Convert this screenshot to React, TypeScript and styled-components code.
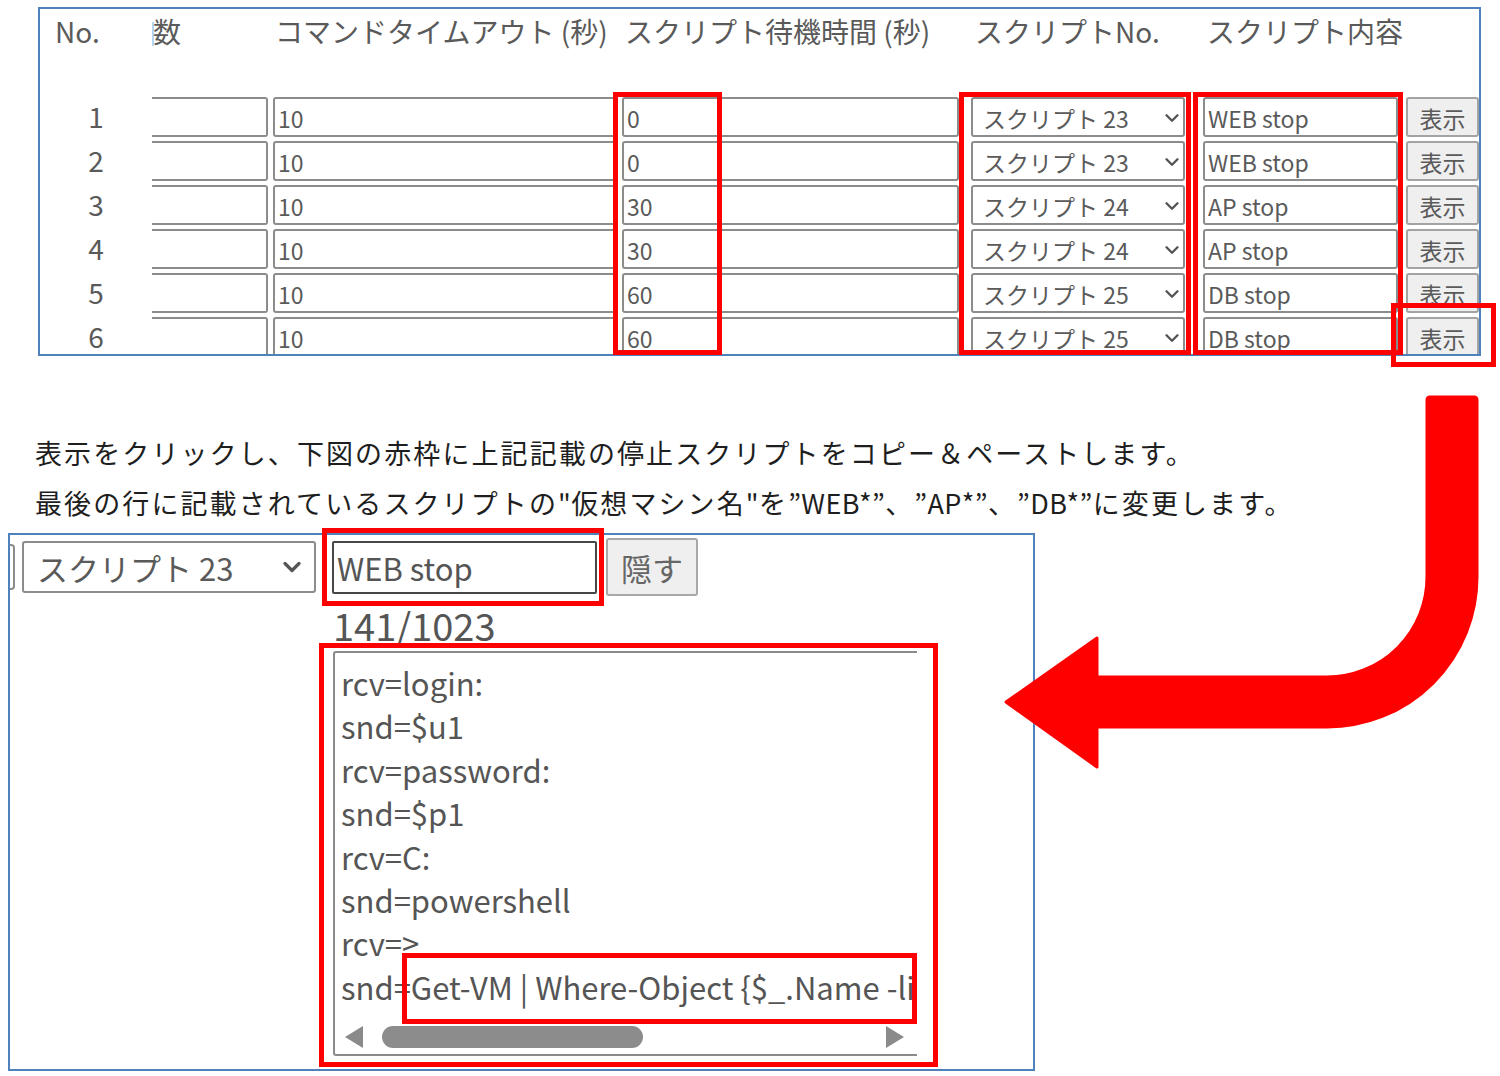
import styled, { createGlobalStyle } from 'styled-components';
import { ChevronDown } from 'lucide-react';

const GlobalStyle = createGlobalStyle`
  html, body {
    margin: 0;
    padding: 0;
    background: #fff;
  }
  body {
    font-family: 'Noto Sans CJK JP', 'Noto Sans', sans-serif;
  }
`;

const Page = styled.div`
  position: relative;
  width: 1500px;
  height: 1076px;
  overflow: hidden;
  background: #fff;
  display: flex;
  flex-direction: column;
`;

/* ---------- top table ---------- */

const cols = '112px 116px 349px 342px 226px 213px 81px';

const TopSection = styled.div`
  position: relative;
  margin: 7px 0 0 38px;
  width: 1443px;
`;

const TablePanel = styled.div`
  box-sizing: border-box;
  width: 1443px;
  height: 349px;
  border: 2px solid #4f81bd;
  overflow: hidden;
`;

const HeaderRow = styled.div`
  box-sizing: border-box;
  display: grid;
  grid-template-columns: ${cols};
  height: 88px;
  padding-top: 3px;
`;

const HeadCell = styled.div<{ $pl: number }>`
  padding-left: ${({ $pl }) => $pl}px;
  font-size: 28px;
  line-height: 39px;
  color: #5a5a5a;
  white-space: nowrap;
`;

const Caret = styled.span`
  display: inline-block;
  width: 2px;
  height: 24px;
  margin-right: -1px;
  vertical-align: -3px;
  background: #b5d6f2;
`;

const Rows = styled.div`
  display: flex;
  flex-direction: column;
  gap: 4px;
`;

const Row = styled.div`
  display: grid;
  grid-template-columns: ${cols};
  height: 40px;
`;

const RowNo = styled.div`
  text-align: center;
  font-size: 28px;
  line-height: 39px;
  color: #5a5a5a;
`;

const Field = styled.input<{ $ml?: number; $cutLeft?: boolean }>`
  box-sizing: border-box;
  margin: 0 0 0 ${({ $ml }) => $ml ?? 0}px;
  width: calc(100% - ${({ $ml }) => $ml ?? 0}px);
  height: 40px;
  border: 2px solid #8c8c8c;
  border-radius: 3px;
  padding: 2px 3px 0;
  font-family: inherit;
  font-size: 23px;
  color: #5a5a5a;
  background: #fff;
  outline: none;
  ${({ $cutLeft }) => $cutLeft && 'border-left: none; border-radius: 0 3px 3px 0;'}
`;

const SelectBox = styled.div<{ $ml: number }>`
  box-sizing: border-box;
  display: flex;
  align-items: center;
  justify-content: space-between;
  margin-left: ${({ $ml }) => $ml}px;
  height: 40px;
  border: 2px solid #8c8c8c;
  border-radius: 3px;
  padding: 2px 0 0 10px;
  font-size: 23px;
  color: #5a5a5a;
  white-space: nowrap;
  background: #fff;
`;

const ShowButton = styled.button`
  box-sizing: border-box;
  margin-left: 8px;
  height: 40px;
  border: 2px solid #a3a3a3;
  border-radius: 3px;
  padding: 2px 0 0;
  background: #efefef;
  font-family: inherit;
  font-size: 23px;
  color: #5a5a5a;
`;

/* ---------- note ---------- */

const Note = styled.div`
  margin: 72px 0 0 35px;
  font-size: 27px;
  line-height: 50px;
  letter-spacing: 2.1px;
  color: #1e1e1e;
  white-space: nowrap;
  text-spacing-trim: space-all;
`;

const Latin = styled.span`
  letter-spacing: 0.4px;
`;

/* ---------- lower editor ---------- */

const LowerSection = styled.div`
  position: relative;
  margin: 5px 0 0 8px;
  width: 1027px;
`;

const EditorPanel = styled.div`
  box-sizing: border-box;
  width: 1027px;
  height: 538px;
  border: 2px solid #4f81bd;
  overflow: hidden;
`;

const EditorRow = styled.div`
  display: flex;
  align-items: center;
  height: 58px;
  margin-top: 3px;
`;

const Stub = styled.div`
  box-sizing: border-box;
  width: 5px;
  height: 46px;
  border: 2px solid #8c8c8c;
  border-left: none;
  border-radius: 0 4px 4px 0;
`;

const BigSelect = styled.div`
  box-sizing: border-box;
  display: flex;
  align-items: center;
  justify-content: space-between;
  width: 294px;
  height: 52px;
  margin-left: 7px;
  border: 2px solid #8c8c8c;
  border-radius: 3px;
  padding: 0 8px 0 13px;
  font-size: 31px;
  color: #5a5a5a;
  white-space: nowrap;
`;

const BigInput = styled.input`
  box-sizing: border-box;
  width: 265px;
  height: 53px;
  margin: 0 0 0 16px;
  border: 2px solid #474747;
  border-radius: 2px;
  padding: 0 3px;
  font-family: inherit;
  font-size: 31px;
  color: #555;
  background: #fff;
  outline: none;
`;

const HideButton = styled.button`
  box-sizing: border-box;
  width: 92px;
  height: 58px;
  margin-left: 9px;
  border: 2px solid #a8a8a8;
  border-radius: 3px;
  padding: 0;
  background: #efefef;
  font-family: inherit;
  font-size: 31px;
  color: #666;
`;

const EditorColumn = styled.div`
  margin-left: 323px;
`;

const Counter = styled.div`
  margin-top: 6px;
  font-size: 38px;
  line-height: 46px;
  color: #555;
`;

const ScriptArea = styled.div`
  box-sizing: border-box;
  width: 584px;
  height: 405px;
  margin-top: 3px;
  border: 2px solid #8a8a8a;
  border-right: none;
  border-radius: 3px 0 0 3px;
  padding: 8px 0 0 6px;
  overflow: hidden;
`;

const CodeLine = styled.div`
  font-size: 31px;
  line-height: 43.4px;
  color: #555;
  white-space: pre;
`;

const ScrollBar = styled.div`
  display: flex;
  align-items: center;
  height: 22px;
  margin-top: 18px;
`;

const ScrollArrow = styled.div<{ $dir: 'left' | 'right' }>`
  width: 0;
  height: 0;
  border-top: 11px solid transparent;
  border-bottom: 11px solid transparent;
  ${({ $dir }) =>
    $dir === 'left'
      ? 'border-right: 18px solid #8a8a8a; margin-left: 4px;'
      : 'border-left: 18px solid #8a8a8a; margin-left: 243px;'}
`;

const ScrollThumb = styled.div`
  width: 261px;
  height: 22px;
  margin-left: 19px;
  border-radius: 11px;
  background: #8c8c8c;
`;

/* ---------- annotations ---------- */

const Frame = styled.div<{ $x: number; $y: number; $w: number; $h: number }>`
  position: absolute;
  left: ${({ $x }) => $x}px;
  top: ${({ $y }) => $y}px;
  width: ${({ $w }) => $w}px;
  height: ${({ $h }) => $h}px;
  box-sizing: border-box;
  border: 5px solid #ff0000;
  pointer-events: none;
  z-index: 2;
`;

const ArrowSvg = styled.svg`
  position: absolute;
  left: 1000px;
  top: 390px;
  width: 490px;
  height: 390px;
  pointer-events: none;
  z-index: 3;
`;

const rows = [
  { no: 1, wait: '0', script: 'スクリプト 23', content: 'WEB stop' },
  { no: 2, wait: '0', script: 'スクリプト 23', content: 'WEB stop' },
  { no: 3, wait: '30', script: 'スクリプト 24', content: 'AP stop' },
  { no: 4, wait: '30', script: 'スクリプト 24', content: 'AP stop' },
  { no: 5, wait: '60', script: 'スクリプト 25', content: 'DB stop' },
  { no: 6, wait: '60', script: 'スクリプト 25', content: 'DB stop' },
];

const scriptLines = [
  'rcv=login:',
  'snd=$u1',
  'rcv=password:',
  'snd=$p1',
  'rcv=C:',
  'snd=powershell',
  'rcv=>',
  'snd=Get-VM | Where-Object {$_.Name -like "WEB*"} | Stop-VM',
];

export default function App() {
  return (
    <Page>
      <GlobalStyle />

      <TopSection>
        <TablePanel>
          <HeaderRow>
            <HeadCell $pl={15}>No.</HeadCell>
            <HeadCell $pl={0}>
              <Caret />数
            </HeadCell>
            <HeadCell $pl={7}>コマンドタイムアウト (秒)</HeadCell>
            <HeadCell $pl={8}>スクリプト待機時間 (秒)</HeadCell>
            <HeadCell $pl={16}>スクリプトNo.</HeadCell>
            <HeadCell $pl={22}>スクリプト内容</HeadCell>
            <HeadCell $pl={0} />
          </HeaderRow>
          <Rows>
            {rows.map((r) => (
              <Row key={r.no}>
                <RowNo>{r.no}</RowNo>
                <Field $cutLeft readOnly defaultValue="" />
                <Field $ml={5} readOnly defaultValue="10" />
                <Field $ml={5} readOnly defaultValue={r.wait} />
                <SelectBox $ml={12}>
                  <span>{r.script}</span>
                  <ChevronDown size={22} strokeWidth={2.6} color="#555" />
                </SelectBox>
                <Field $ml={18} readOnly defaultValue={r.content} />
                <ShowButton>表示</ShowButton>
              </Row>
            ))}
          </Rows>
        </TablePanel>
        <Frame $x={575} $y={85} $w={109} $h={263} />
        <Frame $x={921} $y={85} $w={232} $h={263} />
        <Frame $x={1155} $y={85} $w={210} $h={263} />
        <Frame $x={1353} $y={296} $w={105} $h={64} />
      </TopSection>

      <Note>
        <div>表示をクリックし、下図の赤枠に上記記載の停止スクリプトをコピー＆ペーストします。</div>
        <div>
          最後の行に記載されているスクリプトの<Latin>"</Latin>仮想マシン名<Latin>"</Latin>を
          <Latin>”WEB*”</Latin>、<Latin>”AP*”</Latin>、<Latin>”DB*”</Latin>に変更します。
        </div>
      </Note>

      <LowerSection>
        <EditorPanel>
          <EditorRow>
            <Stub />
            <BigSelect>
              <span>スクリプト 23</span>
              <ChevronDown size={28} strokeWidth={2.8} color="#555" />
            </BigSelect>
            <BigInput readOnly defaultValue="WEB stop" />
            <HideButton>隠す</HideButton>
          </EditorRow>
          <EditorColumn>
            <Counter>141/1023</Counter>
            <ScriptArea>
              {scriptLines.map((line, i) => (
                <CodeLine key={i}>{line}</CodeLine>
              ))}
              <ScrollBar>
                <ScrollArrow $dir="left" />
                <ScrollThumb />
                <ScrollArrow $dir="right" />
              </ScrollBar>
            </ScriptArea>
          </EditorColumn>
        </EditorPanel>
        <Frame $x={314} $y={-5} $w={282} $h={78} />
        <Frame $x={311} $y={110} $w={619} $h={424} />
        <Frame $x={394} $y={420} $w={515} $h={71} />
      </LowerSection>

      <ArrowSvg viewBox="1000 390 490 390">
        <path
          d="M1430 397 L1474 397 Q1477 397 1477 400 L1477 577 A150 150 0 0 1 1327 727 L1097 727 L1097 767 L1006 702 L1097 638 L1097 677 L1327 677 A100 100 0 0 0 1427 577 L1427 400 Q1427 397 1430 397 Z"
          fill="#ff0000"
          stroke="#ff0000"
          strokeWidth={3}
          strokeLinejoin="round"
        />
      </ArrowSvg>
    </Page>
  );
}
